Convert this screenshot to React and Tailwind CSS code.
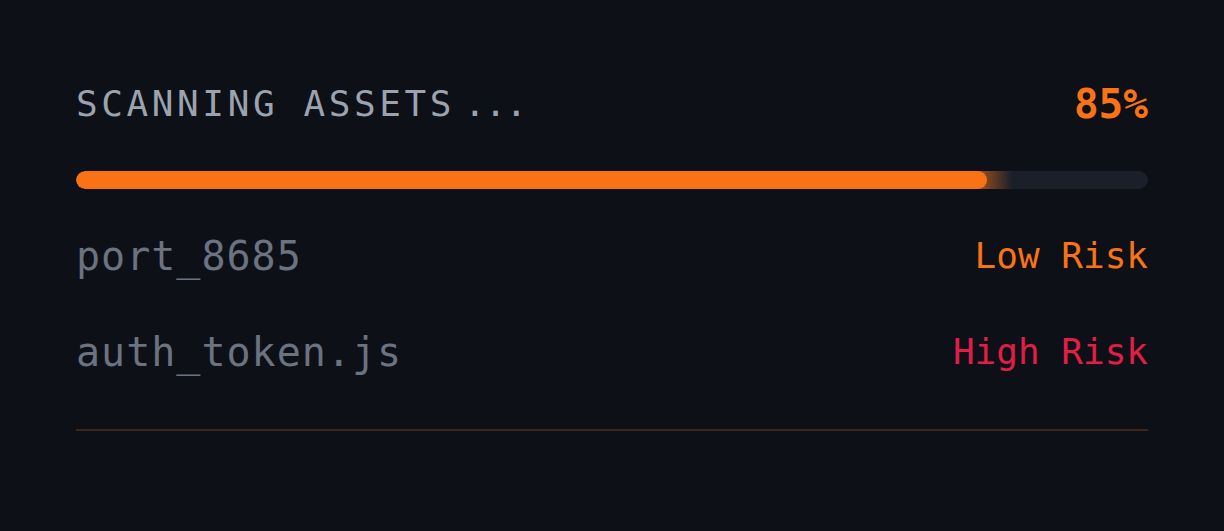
import React from "react";

// scan progress panel
const findings = [
  { name: "port_8685", risk: "Low Risk", color: "text-[#f97316]" },
  { name: "auth_token.js", risk: "High Risk", color: "text-[#e11d48]" },
];

function ProgressBar(props) {
  return (
    <div className="flex h-[18px] w-full overflow-hidden rounded-full bg-[#1b1f2a]">
      <div
        className="h-full shrink-0 rounded-full bg-[#f97316]"
        style={{ width: props.value + "%" }}
      />
      <div className="-ml-[9px] h-full w-[34px] shrink-0 bg-gradient-to-r from-[#f97316]/60 to-transparent" />
    </div>
  );
}

export default function App() {
  return (
    <div className="min-h-[531px] w-full bg-[#0d1017] px-[76px] pt-[84px] font-['DejaVu_Sans_Mono',monospace]">
      <div className="flex h-[40px] items-center justify-between">
        <div className="text-[36px] leading-[36px] text-[#9ca3af]">
          <span className="tracking-[3.6px]">SCANNING ASSETS</span>
          <span className="ml-[9px] tracking-[-1px]">...</span>
        </div>
        <div className="text-[41px] font-bold leading-[40px] text-[#f97316]">85%</div>
      </div>

      <div className="mt-[47px]">
        <ProgressBar value={85} />
      </div>

      <div className="mt-[47px] flex flex-col gap-[56px]">
        {findings.map((f) => (
          <div key={f.name} className="flex h-[40px] items-center justify-between">
            <span className="text-[40px] leading-[40px] tracking-[1px] text-[#6b7280]">{f.name}</span>
            <span className={"text-[36px] leading-[36px] " + f.color}>{f.risk}</span>
          </div>
        ))}
      </div>

      <div className="mt-[57px] h-[2px] w-full bg-[#3d2818]" />
    </div>
  );
}
